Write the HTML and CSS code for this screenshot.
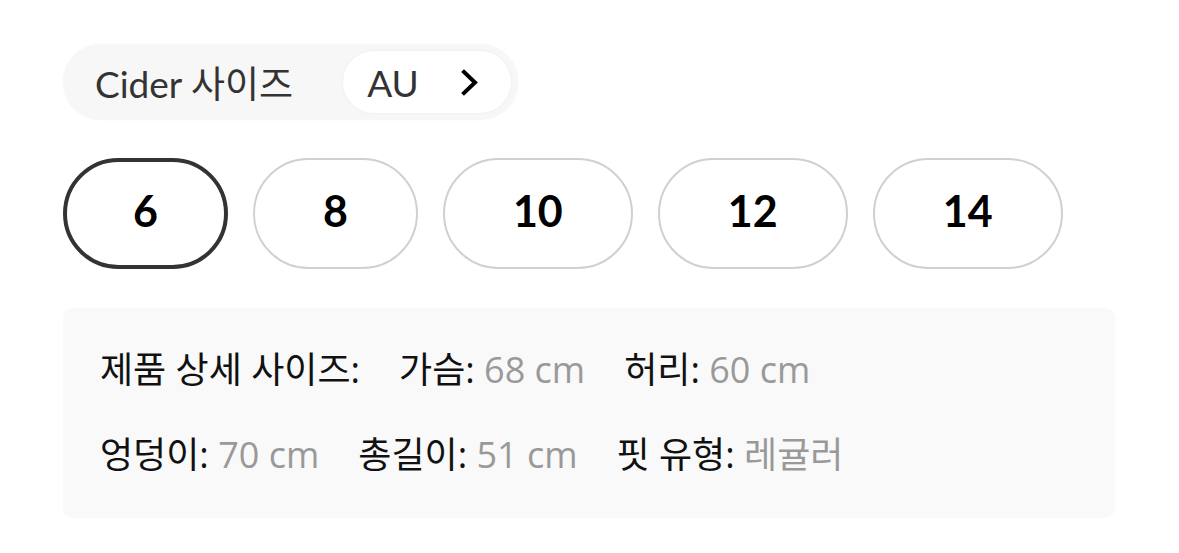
FILE: index.html
```html
<!DOCTYPE html>
<html lang="ko">
<head>
  <meta charset="UTF-8">
  <title>Cider 사이즈</title>
  <link rel="stylesheet" href="styles.css">
</head>
<body>

<div class="page">
  <div class="size-system">
    <span class="size-system-label">Cider 사이즈</span>
    <button class="size-system-pick">
      <span>AU</span>
      <svg width="18" height="27" viewBox="0 0 18 27"><polyline points="3,3 14,13.5 3,24" fill="none" stroke="#000" stroke-width="4" stroke-linecap="square"/></svg>
    </button>
  </div>

  <div class="sizes">
    <button class="size selected">6</button>
    <button class="size">8</button>
    <button class="size">10</button>
    <button class="size">12</button>
    <button class="size">14</button>
  </div>

  <div class="details">
    <div class="details-row">
      <span class="item">제품 상세 사이즈:</span>
      <span class="item">가슴: <span class="value">68 cm</span></span>
      <span class="item">허리: <span class="value">60 cm</span></span>
    </div>
    <div class="details-row">
      <span class="item">엉덩이: <span class="value">70 cm</span></span>
      <span class="item">총길이: <span class="value">51 cm</span></span>
      <span class="item">핏 유형: <span class="value">레귤러</span></span>
    </div>
  </div>
</div>

</body>
</html>
```

FILE: styles.css
```css
body { margin: 0; background: #fff; font-family: Lato, "Noto Sans CJK KR", sans-serif; }
.page { padding: 44px 0 0 63px; }

.size-system { display: inline-flex; align-items: center; gap: 50px; height: 76px; box-sizing: border-box; padding: 0 7px 0 32px; background: #f7f7f7; border-radius: 38px; box-shadow: 0 0 2px rgba(0,0,0,0.05); }
.size-system-label { font-size: 37px; color: #333; }
.size-system-pick { display: flex; align-items: center; gap: 42px; height: 62px; padding: 0 32px 0 24px; border: none; border-radius: 31px; background: #fff; box-shadow: 0 0 3px rgba(0,0,0,0.06); font-family: inherit; font-size: 37px; color: #333; }

.sizes { display: flex; gap: 25px; margin-top: 38px; }
.size { height: 111px; box-sizing: border-box; padding: 0 68px 6px; border: 2px solid #d0d0d0; border-radius: 56px; background: #fff; font-family: Lato, sans-serif; font-weight: bold; font-size: 43px; color: #000; }
.size.selected { border: 4px solid #333; padding: 0 66px 6px; }

.details { width: 1052px; box-sizing: border-box; margin-top: 39px; padding: 40px 37px 41px; background: #f9f9f9; border-radius: 10px; font-family: "Open Sans", "Noto Sans CJK KR", sans-serif; font-size: 36px; color: #111; }
.details-row { display: flex; gap: 39px; line-height: 44px; }
.details-row + .details-row { margin-top: 41px; }
.value { color: #999; }
```
